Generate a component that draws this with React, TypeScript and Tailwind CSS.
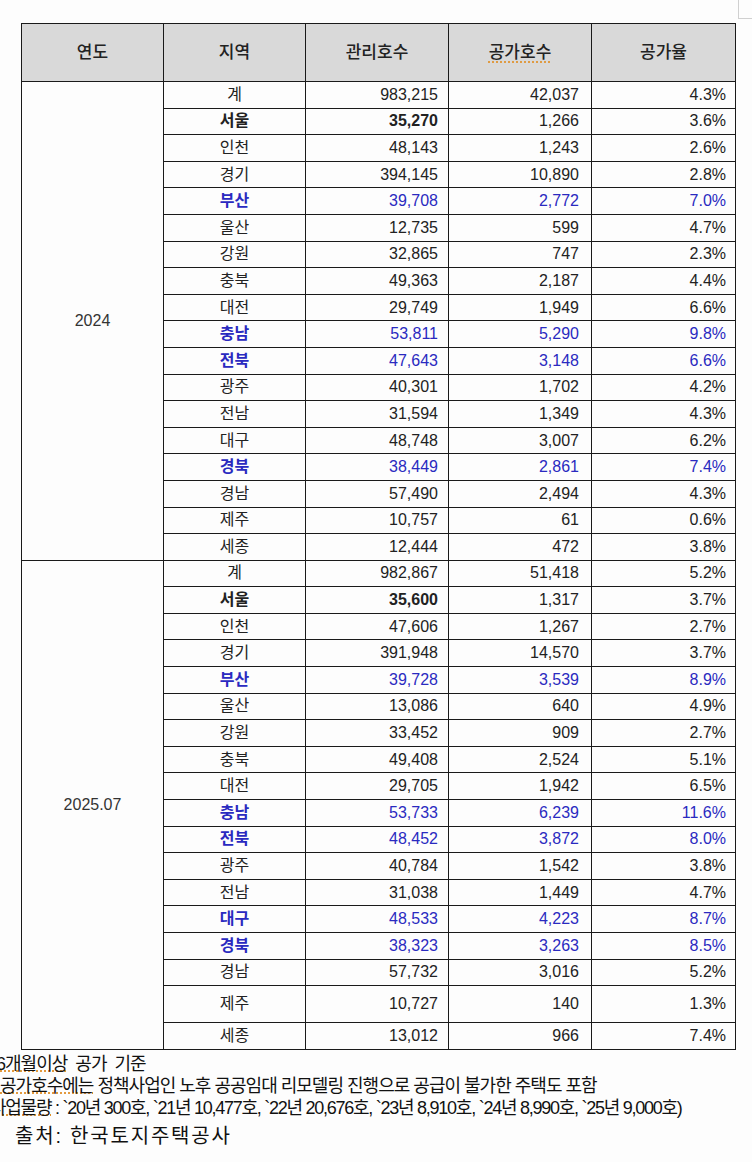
import React from 'react';

type Row = {
  region: string;
  total: string;
  vacant: string;
  rate: string;
  blue?: boolean;
  bold?: boolean;
  tall?: boolean;
};

const data2024: Row[] = [
  { region: '계', total: '983,215', vacant: '42,037', rate: '4.3%' },
  { region: '서울', total: '35,270', vacant: '1,266', rate: '3.6%', bold: true },
  { region: '인천', total: '48,143', vacant: '1,243', rate: '2.6%' },
  { region: '경기', total: '394,145', vacant: '10,890', rate: '2.8%' },
  { region: '부산', total: '39,708', vacant: '2,772', rate: '7.0%', blue: true },
  { region: '울산', total: '12,735', vacant: '599', rate: '4.7%' },
  { region: '강원', total: '32,865', vacant: '747', rate: '2.3%' },
  { region: '충북', total: '49,363', vacant: '2,187', rate: '4.4%' },
  { region: '대전', total: '29,749', vacant: '1,949', rate: '6.6%' },
  { region: '충남', total: '53,811', vacant: '5,290', rate: '9.8%', blue: true },
  { region: '전북', total: '47,643', vacant: '3,148', rate: '6.6%', blue: true },
  { region: '광주', total: '40,301', vacant: '1,702', rate: '4.2%' },
  { region: '전남', total: '31,594', vacant: '1,349', rate: '4.3%' },
  { region: '대구', total: '48,748', vacant: '3,007', rate: '6.2%' },
  { region: '경북', total: '38,449', vacant: '2,861', rate: '7.4%', blue: true },
  { region: '경남', total: '57,490', vacant: '2,494', rate: '4.3%' },
  { region: '제주', total: '10,757', vacant: '61', rate: '0.6%' },
  { region: '세종', total: '12,444', vacant: '472', rate: '3.8%' },
];

const data2025: Row[] = [
  { region: '계', total: '982,867', vacant: '51,418', rate: '5.2%' },
  { region: '서울', total: '35,600', vacant: '1,317', rate: '3.7%', bold: true },
  { region: '인천', total: '47,606', vacant: '1,267', rate: '2.7%' },
  { region: '경기', total: '391,948', vacant: '14,570', rate: '3.7%' },
  { region: '부산', total: '39,728', vacant: '3,539', rate: '8.9%', blue: true },
  { region: '울산', total: '13,086', vacant: '640', rate: '4.9%' },
  { region: '강원', total: '33,452', vacant: '909', rate: '2.7%' },
  { region: '충북', total: '49,408', vacant: '2,524', rate: '5.1%' },
  { region: '대전', total: '29,705', vacant: '1,942', rate: '6.5%' },
  { region: '충남', total: '53,733', vacant: '6,239', rate: '11.6%', blue: true },
  { region: '전북', total: '48,452', vacant: '3,872', rate: '8.0%', blue: true },
  { region: '광주', total: '40,784', vacant: '1,542', rate: '3.8%' },
  { region: '전남', total: '31,038', vacant: '1,449', rate: '4.7%' },
  { region: '대구', total: '48,533', vacant: '4,223', rate: '8.7%', blue: true },
  { region: '경북', total: '38,323', vacant: '3,263', rate: '8.5%', blue: true },
  { region: '경남', total: '57,732', vacant: '3,016', rate: '5.2%' },
  { region: '제주', total: '10,727', vacant: '140', rate: '1.3%', tall: true },
  { region: '세종', total: '13,012', vacant: '966', rate: '7.4%' },
];

const cell = 'border border-[#1a1a1a] p-0 leading-none';

function Rows({ year, rows }: { year: string; rows: Row[] }) {
  return (
    <>
      {rows.map((r, i) => {
        const color = r.blue ? 'text-[#2a2ac0]' : 'text-[#222]';
        return (
          <tr key={r.region} className={r.tall ? 'h-[37px]' : 'h-[26.6px]'}>
            {i === 0 && (
              <td rowSpan={rows.length} className={`${cell} text-center text-[16px] text-[#333]`}>
                {year}
              </td>
            )}
            <td
              className={`${cell} text-center text-[16px] ${color} ${r.blue || r.bold ? 'font-bold' : ''}`}
            >
              {r.region}
            </td>
            <td className={`${cell} text-right pr-[10px] text-[16px] ${color} ${r.bold ? 'font-bold' : ''}`}>
              {r.total}
            </td>
            <td className={`${cell} text-right pr-[12px] text-[16px] ${color}`}>{r.vacant}</td>
            <td className={`${cell} text-right pr-[9px] text-[16px] ${color}`}>{r.rate}</td>
          </tr>
        );
      })}
    </>
  );
}

export default function App() {
  return (
    <div
      className="relative w-[752px] h-[1162px] bg-[#fdfdfd] overflow-hidden"
      style={{ fontFamily: '"Liberation Sans", "Noto Sans CJK KR", sans-serif' }}
    >
      <div className="absolute left-[738px] top-0 h-[19px] w-[14px] border-l border-b border-[#d0d0d0]" />

      <div className="pt-[23px] pl-[21px]">
        <table className="table-fixed border-collapse w-[714px]">
          <colgroup>
            <col className="w-[142px]" />
            <col className="w-[142px]" />
            <col className="w-[143px]" />
            <col className="w-[143px]" />
            <col className="w-[144px]" />
          </colgroup>
          <thead>
            <tr className="h-[58px] bg-[#d9d9d9]">
              <th className={`${cell} text-[17px] font-medium text-[#222]`}>연도</th>
              <th className={`${cell} text-[17px] font-medium text-[#222]`}>지역</th>
              <th className={`${cell} text-[17px] font-medium text-[#222]`}>관리호수</th>
              <th className={`${cell} text-[17px] font-medium text-[#222]`}>
                <span className="underline decoration-dotted decoration-[#e0902a] underline-offset-4">
                  공가호수
                </span>
              </th>
              <th className={`${cell} text-[17px] font-medium text-[#222]`}>공가율</th>
            </tr>
          </thead>
          <tbody>
            <Rows year="2024" rows={data2024} />
            <Rows year="2025.07" rows={data2025} />
          </tbody>
        </table>
      </div>

      <div className="mt-[3px] text-[#111] text-[18px] tracking-[-0.055em] leading-[22px] whitespace-pre">
        <p className="-ml-[4px]">
          <span className="underline decoration-dotted decoration-[#e0902a]">6개월이상</span>
          {'  공가  기준'}
        </p>
        <p>
          <span className="underline decoration-dotted decoration-[#e0902a]">공가호수에는</span>
          {' 정책사업인 노후 공공임대 리모델링 진행으로 공급이 불가한 주택도 포함'}
        </p>
        <p className="-ml-[10px] tracking-[-0.07em]">
          <span className="underline decoration-dotted decoration-[#e0902a]">사업물량</span>
          {' : `20년 300호, `21년 10,477호, `22년 20,676호, `23년 8,910호, `24년 8,990호, `25년 9,000호)'}
        </p>
        <p className="pl-[15px] mt-[5px] text-[20px] tracking-[0.09em] leading-[25px]">출처: 한국토지주택공사</p>
      </div>
    </div>
  );
}
